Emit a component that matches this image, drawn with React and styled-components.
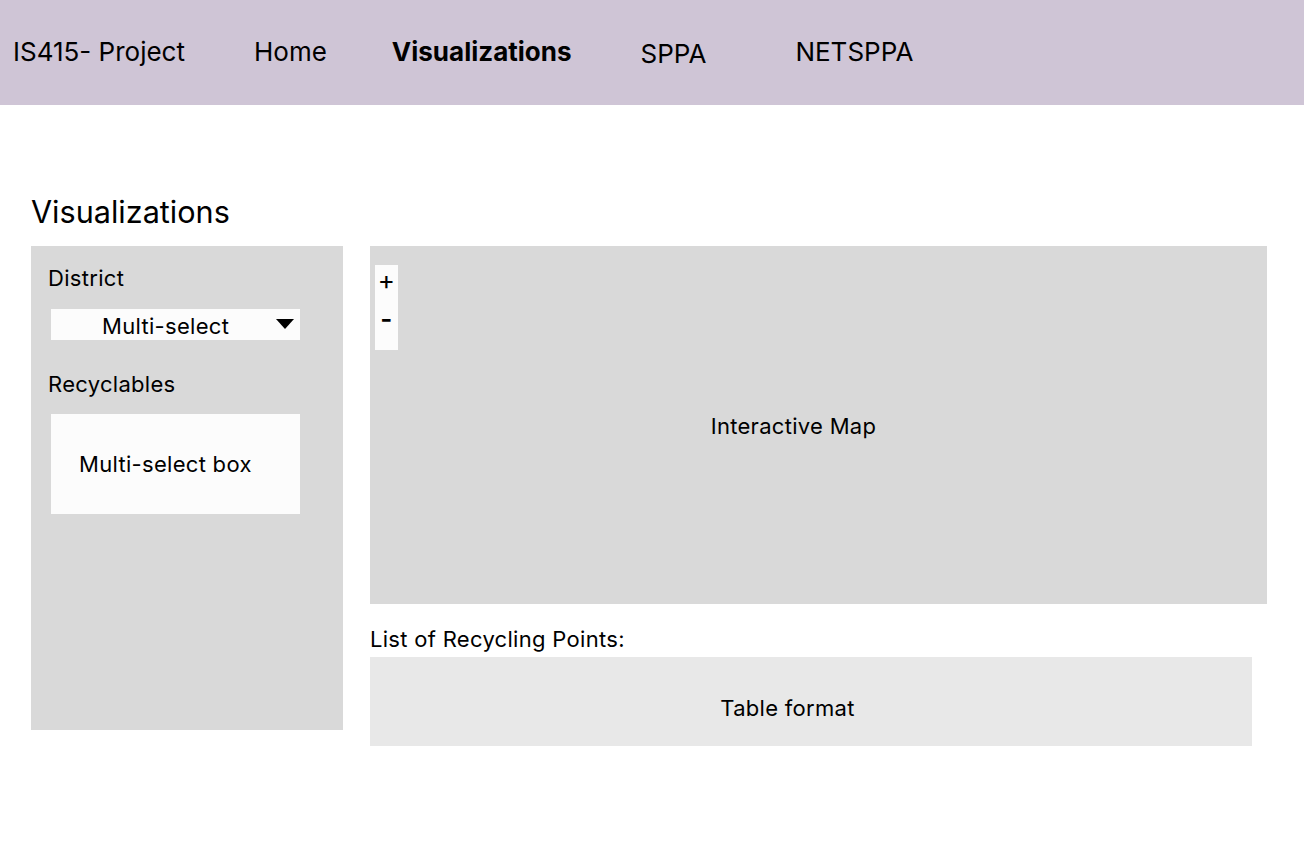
import React from "react";
import styled, { createGlobalStyle } from "styled-components";

const Global = createGlobalStyle`
  html, body { margin: 0; padding: 0; background: #ffffff; }
  body { font-family: Inter, "Noto Sans", sans-serif; color: #000; }
  * { box-sizing: border-box; }
`;

const Page = styled.div`
  width: 1304px;
  min-height: 848px;
  background: #fff;
`;

const Header = styled.header`
  height: 105px;
  background: #cfc5d6;
  display: flex;
  align-items: center;
  padding-left: 13px;
  padding-bottom: 2px;
`;

const NavItem = styled.div`
  font-size: 26px;
  font-weight: ${(p) => (p.$active ? 700 : 400)};
  margin-left: ${(p) => p.$ml || 0}px;
  margin-top: ${(p) => p.$mt || 0}px;
  white-space: nowrap;
`;

const Main = styled.main`
  padding: 88px 0 0 31px;
`;

const Title = styled.h1`
  margin: 0 0 15px 0;
  font-size: 30.6px;
  font-weight: 400;
  line-height: 38px;
`;

const Row = styled.div`
  display: flex;
  align-items: flex-start;
  gap: 27px;
`;

const Sidebar = styled.aside`
  width: 312px;
  height: 484px;
  background: #d9d9d9;
  padding: 18px 0 0 17px;
  display: flex;
  flex-direction: column;
`;

const Label = styled.div`
  font-size: 22px;
  letter-spacing: 0.3px;
  line-height: 28px;
  margin-bottom: ${(p) => p.$mb || 0}px;
`;

const Select = styled.div`
  width: 249px;
  height: 31px;
  margin-left: 3px;
  background: #fcfcfc;
  display: flex;
  align-items: center;
  position: relative;
  font-size: 22px;
  letter-spacing: 0.3px;
  margin-bottom: 30px;
`;

const SelectText = styled.span`
  margin-left: 51px;
  padding-top: 2px;
`;

const Caret = styled.span`
  position: absolute;
  right: 6px;
  top: 10px;
  width: 0;
  height: 0;
  border-left: 9px solid transparent;
  border-right: 9px solid transparent;
  border-top: 10px solid #000;
`;

const Box = styled.div`
  width: 249px;
  height: 100px;
  margin-left: 3px;
  margin-top: 1px;
  background: #fcfcfc;
  display: flex;
  align-items: center;
  padding-left: 28px;
  font-size: 22px;
  letter-spacing: 0.3px;
`;

const RightCol = styled.section`
  display: flex;
  flex-direction: column;
`;

const Map = styled.div`
  width: 897px;
  height: 358px;
  background: #d9d9d9;
  position: relative;
  display: flex;
  align-items: center;
  justify-content: center;
  font-size: 22px;
  letter-spacing: 0.3px;
  padding-right: 50px;
  padding-top: 2px;
`;

const Zoom = styled.div`
  position: absolute;
  left: 5px;
  top: 19px;
  width: 23px;
  height: 85px;
  background: #fcfcfc;
  display: flex;
  flex-direction: column;
  align-items: center;
  font-size: 26px;
  line-height: 36px;
`;

const ZoomSign = styled.span`
  font-weight: ${(p) => (p.$bold ? 600 : 400)};
  margin-top: ${(p) => p.$mt || 0}px;
`;

const ListLabel = styled.div`
  font-size: 22px;
  letter-spacing: 0.3px;
  line-height: 28px;
  margin-top: 21px;
  margin-bottom: 4px;
`;

const Table = styled.div`
  width: 882px;
  height: 89px;
  background: #e8e8e8;
  display: flex;
  align-items: center;
  justify-content: center;
  font-size: 22px;
  letter-spacing: 0.3px;
  padding-top: 12px;
  padding-right: 47px;
`;

export default function App() {
  return (
    <Page>
      <Global />
      <Header>
        <NavItem>IS415- Project</NavItem>
        <NavItem $ml={69}>Home</NavItem>
        <NavItem $ml={65} $active>
          Visualizations
        </NavItem>
        <NavItem $ml={69} $mt={4}>SPPA</NavItem>
        <NavItem $ml={89}>NETSPPA</NavItem>
      </Header>
      <Main>
        <Title>Visualizations</Title>
        <Row>
          <Sidebar>
            <Label $mb={17}>District</Label>
            <Select>
              <SelectText>Multi-select</SelectText>
              <Caret />
            </Select>
            <Label $mb={15}>Recyclables</Label>
            <Box>Multi-select box</Box>
          </Sidebar>
          <RightCol>
            <Map>
              <Zoom>
                <ZoomSign $mt={-3}>+</ZoomSign>
                <ZoomSign $bold $mt={3}>-</ZoomSign>
              </Zoom>
              Interactive Map
            </Map>
            <ListLabel>List of Recycling Points:</ListLabel>
            <Table>Table format</Table>
          </RightCol>
        </Row>
      </Main>
    </Page>
  );
}
